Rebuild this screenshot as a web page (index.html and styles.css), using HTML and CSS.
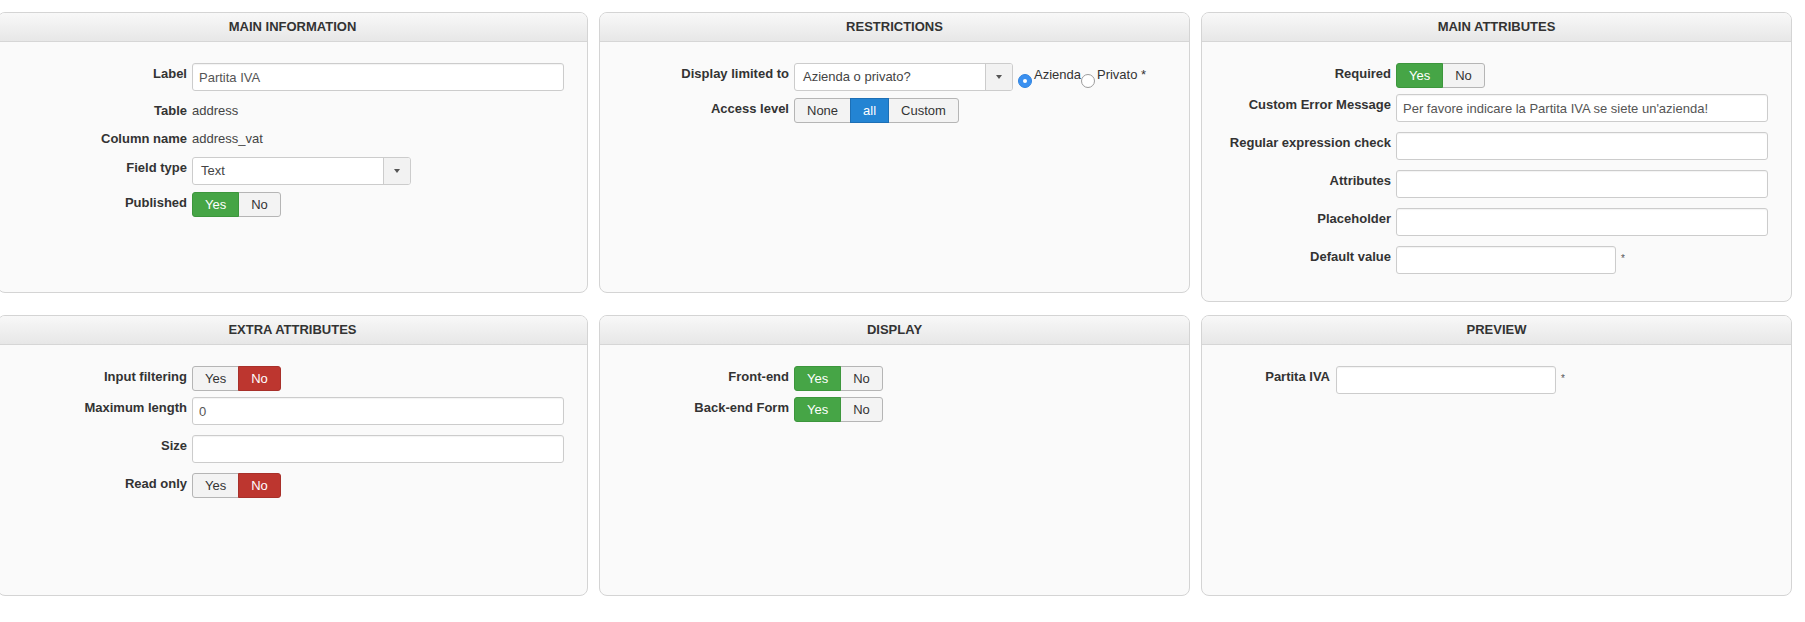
FILE: index.html
```html
<!DOCTYPE html>
<html lang="en">
<head>
    <meta charset="UTF-8">
    <title>Field: Partita IVA</title>
    <link rel="stylesheet" href="styles.css">
</head>
<body>
    <div class="panels">
        <!-- Main information -->
        <div class="panel">
            <div class="panel-head">Main information</div>
            <div class="panel-body">
                <div class="field">
                    <label class="field-label">Label</label>
                    <input class="input" type="text" value="Partita IVA">
                </div>
                <div class="field is-text">
                    <span class="field-label">Table</span>
                    <span class="field-value">address</span>
                </div>
                <div class="field is-text">
                    <span class="field-label">Column name</span>
                    <span class="field-value">address_vat</span>
                </div>
                <div class="field is-select">
                    <label class="field-label">Field type</label>
                    <div class="select"><span class="select-text">Text</span><span class="select-arrow"></span></div>
                </div>
                <div class="field is-toggle">
                    <label class="field-label">Published</label>
                    <div class="btn-group">
                        <span class="btn btn-success">Yes</span><span class="btn">No</span>
                    </div>
                </div>
            </div>
        </div>

        <!-- Restrictions -->
        <div class="panel">
            <div class="panel-head">Restrictions</div>
            <div class="panel-body">
                <div class="field is-select">
                    <label class="field-label">Display limited to</label>
                    <div class="select"><span class="select-text">Azienda o privato?</span><span class="select-arrow"></span></div>
                    <div class="radio-group">
                        <span class="radio is-checked"></span><span class="radio-text">Azienda</span>
                        <span class="radio"></span><span class="radio-text">Privato *</span>
                    </div>
                </div>
                <div class="field is-toggle">
                    <label class="field-label">Access level</label>
                    <div class="btn-group">
                        <span class="btn">None</span><span class="btn btn-primary">all</span><span class="btn">Custom</span>
                    </div>
                </div>
            </div>
        </div>

        <!-- Main attributes -->
        <div class="panel">
            <div class="panel-head">Main attributes</div>
            <div class="panel-body">
                <div class="field is-toggle">
                    <label class="field-label">Required</label>
                    <div class="btn-group">
                        <span class="btn btn-success">Yes</span><span class="btn">No</span>
                    </div>
                </div>
                <div class="field">
                    <label class="field-label">Custom Error Message</label>
                    <input class="input" type="text" value="Per favore indicare la Partita IVA se siete un'azienda!">
                </div>
                <div class="field">
                    <label class="field-label">Regular expression check</label>
                    <input class="input" type="text" value="">
                </div>
                <div class="field">
                    <label class="field-label">Attributes</label>
                    <input class="input" type="text" value="">
                </div>
                <div class="field">
                    <label class="field-label">Placeholder</label>
                    <input class="input" type="text" value="">
                </div>
                <div class="field">
                    <label class="field-label">Default value</label>
                    <input class="input is-short" type="text" value="">
                    <span class="star">*</span>
                </div>
            </div>
        </div>

        <!-- Extra attributes -->
        <div class="panel">
            <div class="panel-head">Extra attributes</div>
            <div class="panel-body">
                <div class="field is-toggle">
                    <label class="field-label">Input filtering</label>
                    <div class="btn-group">
                        <span class="btn">Yes</span><span class="btn btn-danger">No</span>
                    </div>
                </div>
                <div class="field">
                    <label class="field-label">Maximum length</label>
                    <input class="input" type="text" value="0">
                </div>
                <div class="field">
                    <label class="field-label">Size</label>
                    <input class="input" type="text" value="">
                </div>
                <div class="field is-toggle">
                    <label class="field-label">Read only</label>
                    <div class="btn-group">
                        <span class="btn">Yes</span><span class="btn btn-danger">No</span>
                    </div>
                </div>
            </div>
        </div>

        <!-- Display -->
        <div class="panel">
            <div class="panel-head">Display</div>
            <div class="panel-body">
                <div class="field is-toggle">
                    <label class="field-label">Front-end</label>
                    <div class="btn-group">
                        <span class="btn btn-success">Yes</span><span class="btn">No</span>
                    </div>
                </div>
                <div class="field is-toggle">
                    <label class="field-label">Back-end Form</label>
                    <div class="btn-group">
                        <span class="btn btn-success">Yes</span><span class="btn">No</span>
                    </div>
                </div>
            </div>
        </div>

        <!-- Preview -->
        <div class="panel">
            <div class="panel-head">Preview</div>
            <div class="panel-body">
                <div class="preview-field">
                    <label class="preview-label">Partita IVA</label>
                    <input class="input is-short" type="text" value="">
                    <span class="star">*</span>
                </div>
            </div>
        </div>
    </div>
</body>
</html>
```

FILE: styles.css
```css
* {
    box-sizing: border-box;
}

body {
    margin: 0;
    background: #fff;
    font-family: "Liberation Sans", Arial, sans-serif;
    font-size: 13px;
    color: #333;
}

.panels {
    display: grid;
    grid-template-columns: repeat(3, 591px);
    column-gap: 11px;
    row-gap: 13px;
    align-items: start;
    margin-left: -3px;
    padding-top: 12px;
}

.panel {
    min-height: 281px;
    border: 1px solid #d4d4d4;
    border-radius: 8px;
    background: #fafafa;
    overflow: hidden;
}

.panel-head {
    height: 29px;
    line-height: 28px;
    border-bottom: 1px solid #d6d6d6;
    background: linear-gradient(#f8f8f8, #e7e7e7);
    text-align: center;
    font-size: 13px;
    font-weight: bold;
    text-transform: uppercase;
    color: #333;
}

.panel-body {
    padding: 21px 23px 17px 0;
}

/* label / control rows */
.field {
    display: flex;
    align-items: flex-start;
    margin-bottom: 10px;
}

.field-label {
    flex: none;
    width: 189px;
    margin-right: 5px;
    padding-top: 2px;
    line-height: 18px;
    text-align: right;
    font-weight: bold;
}

.field.is-text {
    margin-bottom: 8px;
}

.field.is-text .field-label,
.field-value {
    padding-top: 0;
    line-height: 20px;
}

.field-value {
    color: #444;
}

.field.is-select {
    margin-bottom: 7px;
}

.field.is-toggle {
    margin-bottom: 6px;
}

.input {
    width: 372px;
    height: 28px;
    margin: 0;
    padding: 0 6px;
    border: 1px solid #ccc;
    border-radius: 3px;
    background: #fff;
    box-shadow: inset 0 1px 1px rgba(0, 0, 0, 0.05);
    font-family: inherit;
    font-size: 13px;
    color: #555;
}

.input.is-short {
    width: 220px;
}

.star {
    margin-left: 5px;
    padding-top: 7px;
    font-size: 10px;
    line-height: 12px;
    color: #555;
}

/* chosen style select */
.select {
    display: flex;
    width: 219px;
    height: 28px;
    border: 1px solid #ccc;
    border-radius: 3px;
    background: #fff;
    overflow: hidden;
}

.select-text {
    flex: 1;
    padding-left: 8px;
    line-height: 26px;
    color: #444;
}

.select-arrow {
    display: flex;
    align-items: center;
    justify-content: center;
    width: 27px;
    border-left: 1px solid #ccc;
    background: #f2f2f2;
}

.select-arrow::after {
    content: "";
    border-top: 4px solid #555;
    border-left: 3.5px solid transparent;
    border-right: 3.5px solid transparent;
}

.radio-group {
    display: flex;
    align-items: flex-start;
    margin-left: 5px;
}

.radio {
    width: 14px;
    height: 14px;
    margin-top: 11px;
    border: 1px solid #9c9c9c;
    border-radius: 50%;
    background: #fff;
}

.radio.is-checked {
    display: flex;
    align-items: center;
    justify-content: center;
    border-color: #2f83e0;
    background: #3a90f0;
}

.radio.is-checked::after {
    content: "";
    width: 4px;
    height: 4px;
    border-radius: 50%;
    background: #fff;
}

.radio-text {
    padding: 3px 0 0 2px;
    line-height: 18px;
}

/* toggle buttons */
.btn-group {
    display: flex;
}

.btn {
    height: 25px;
    padding: 0 12px;
    border: 1px solid #b5b5b5;
    background: #f3f3f3;
    line-height: 23px;
    font-size: 13px;
    color: #333;
}

.btn:first-child {
    border-radius: 3px 0 0 3px;
}

.btn:last-child {
    border-radius: 0 3px 3px 0;
}

.btn + .btn {
    margin-left: -1px;
}

.btn-success,
.btn-danger,
.btn-primary {
    position: relative;
    color: #fff;
}

.btn-success {
    border-color: #3c963c;
    background: #46a546;
}

.btn-danger {
    border-color: #a8302a;
    background: #bd362f;
}

.btn-primary {
    border-color: #1d6fb5;
    background: #2384d3;
}

/* preview form */
.preview-field {
    display: flex;
    align-items: flex-start;
}

.preview-label {
    flex: none;
    width: 128px;
    margin-right: 6px;
    padding-top: 2px;
    line-height: 18px;
    text-align: right;
    font-weight: bold;
}
```
